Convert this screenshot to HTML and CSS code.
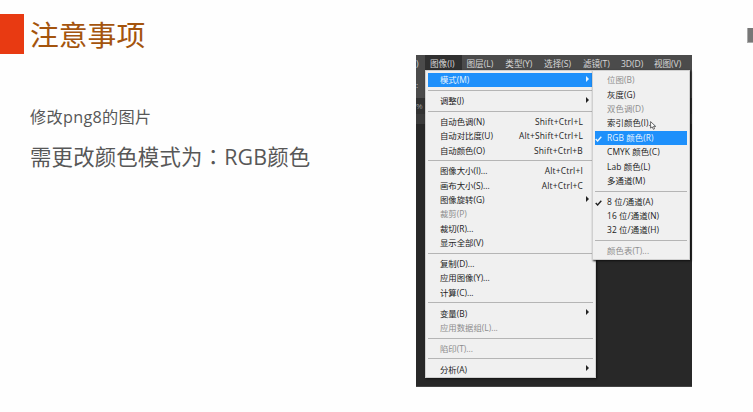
FILE: index.html
```html
<!DOCTYPE html>
<html lang="zh-CN">
<head>
<meta charset="utf-8">
<title>注意事项</title>
<link rel="stylesheet" href="styles.css">
</head>
<body>
<main class="slide">
  <section class="notes">
    <header class="heading"><span class="block"></span><h1>注意事项</h1></header>
    <p class="sub">修改png8的图片</p>
    <p class="lead">需更改颜色模式为<span class="colon" lang="zh-TW">：</span>RGB颜色</p>
  </section>
  <section class="editor">
    <nav class="menubar">
      <span class="cut">)</span><span class="open">图像(I)</span><span>图层(L)</span><span>类型(Y)</span><span>选择(S)</span><span>滤镜(T)</span><span>3D(D)</span><span>视图(V)</span>
    </nav>
    <div class="options">:</div>
    <div class="tabs">%</div>
    <div class="ruler"></div>
    <div class="menu main">
      <div class="row active"><span>模式(M)</span><i class="arrow"></i></div>
      <hr>
      <div class="row"><span>调整(J)</span><i class="arrow"></i></div>
      <hr>
      <div class="row"><span>自动色调(N)</span><kbd>Shift+Ctrl+L</kbd></div>
      <div class="row"><span>自动对比度(U)</span><kbd>Alt+Shift+Ctrl+L</kbd></div>
      <div class="row"><span>自动颜色(O)</span><kbd>Shift+Ctrl+B</kbd></div>
      <hr>
      <div class="row"><span>图像大小(I)...</span><kbd>Alt+Ctrl+I</kbd></div>
      <div class="row"><span>画布大小(S)...</span><kbd>Alt+Ctrl+C</kbd></div>
      <div class="row"><span>图像旋转(G)</span><i class="arrow"></i></div>
      <div class="row off"><span>裁剪(P)</span></div>
      <div class="row"><span>裁切(R)...</span></div>
      <div class="row"><span>显示全部(V)</span></div>
      <hr>
      <div class="row"><span>复制(D)...</span></div>
      <div class="row"><span>应用图像(Y)...</span></div>
      <div class="row"><span>计算(C)...</span></div>
      <hr>
      <div class="row"><span>变量(B)</span><i class="arrow"></i></div>
      <div class="row off"><span>应用数据组(L)...</span></div>
      <hr>
      <div class="row off"><span>陷印(T)...</span></div>
      <hr>
      <div class="row"><span>分析(A)</span><i class="arrow"></i></div>
    </div>
    <div class="menu submenu">
      <div class="row off"><span>位图(B)</span></div>
      <div class="row"><span>灰度(G)</span></div>
      <div class="row off"><span>双色调(D)</span></div>
      <div class="row"><span>索引颜色(I)...</span></div>
      <div class="row active"><svg class="check" viewBox="0 0 7 6"><path d="M.7 3 2.6 5 6.3.8"/></svg><span>RGB 颜色(R)</span></div>
      <div class="row"><span>CMYK 颜色(C)</span></div>
      <div class="row"><span>Lab 颜色(L)</span></div>
      <div class="row"><span>多通道(M)</span></div>
      <hr>
      <div class="row"><svg class="check" viewBox="0 0 7 6"><path d="M.7 3 2.6 5 6.3.8"/></svg><span>8 位/通道(A)</span></div>
      <div class="row"><span>16 位/通道(N)</span></div>
      <div class="row"><span>32 位/通道(H)</span></div>
      <hr>
      <div class="row off"><span>颜色表(T)...</span></div>
    </div>
    <svg class="cursor" viewBox="0 0 7 9"><path d="M.6.6v6.5l1.6-1.3 1.2 2.5 1.2-.6-1.1-2.3h2.2z"/></svg>
  </section>
  <span class="edge"></span>
</main>
</body>
</html>
```

FILE: styles.css
```css
* { box-sizing: border-box; }
body { margin: 0; background: #fefefe; font-family: "Open Sans", "Noto Sans CJK SC", sans-serif; }
.slide { position: relative; display: flex; width: 753px; height: 412px; overflow: hidden; }
.notes { width: 416px; padding-top: 14px; color: #575757; }
.heading { display: flex; align-items: center; height: 40px; gap: 6px; }
.block { width: 24px; height: 40px; background: #e83a12; }
h1 { margin: 0; padding-top: 1px; font-size: 28.8px; line-height: 40px; font-weight: 400; color: #a4540d; }
.sub, .lead { margin: 0 0 0 30px; white-space: nowrap; }
.sub { margin-top: 51px; font-size: 16.2px; line-height: 24px; letter-spacing: .3px; }
.lead { margin-top: 12px; font-size: 21.4px; line-height: 32px; letter-spacing: .18px; }
.colon { font-family: "Noto Sans CJK TC", sans-serif; line-height: 1; }
.editor { position: relative; width: 276px; height: 332px; margin-top: 55px; background: #282828; border-bottom: 1px solid #444; }
.menubar { display: flex; height: 16px; background: #4b4b4b; color: #d8d8d8; font-size: 8.6px; line-height: 18px; white-space: nowrap; }
.menubar span { width: 38.8px; padding-left: 5px; }
.menubar .cut { width: 9px; padding-left: 0; }
.menubar .open { width: 36.5px; background: #303030; }
.menubar span:nth-child(6) { width: 38px; }
.menubar span:nth-child(7) { width: 33px; }
.options { height: 27px; background: #4b4b4b; color: #ccc; font-size: 8px; line-height: 27px; }
.tabs { height: 16px; background: #323232; color: #999; font-size: 8px; line-height: 16px; }
.ruler { height: 10px; background: #3b3b3b; }
.menu { position: absolute; top: 15px; background: #f0f0f0; border: 1px solid #d0d0d0; box-shadow: 1px 1px 2px #111; color: #222; font-size: 8.4px; }
.main { left: 9px; width: 171px; height: 308px; padding: 2px 2px 0; }
.submenu { left: 176px; width: 98px; height: 190px; padding: 2px 2px 0; }
.submenu .row { letter-spacing: .1px; }
.row { position: relative; display: flex; align-items: center; height: 14.4px; padding: 0 10px 0 12px; white-space: nowrap; line-height: 14px; }
.row > span { flex: 1; }
.row.off { color: #8c8c8c; }
.row.active { background: #1e90fb; color: #e8f5ff; }
kbd { font-family: inherit; letter-spacing: .22px; }
hr { height: 1px; margin: 2.4px 0 3px; border: 0; background: #b5b5b5; }
.arrow { position: absolute; right: 4px; top: 3px; border: 3px solid transparent; border-left: 3.5px solid currentColor; border-right: 0; }
.check { position: absolute; left: 0; top: 5px; width: 7px; height: 6px; fill: none; stroke: currentColor; stroke-width: 1.4; }
.cursor { position: absolute; left: 234px; top: 66px; width: 7px; height: 9px; fill: #fff; stroke: #444; stroke-width: .8; }
.edge { position: absolute; right: 0; top: 28px; width: 6px; height: 15px; background: #777; border-left: 1px solid #aaa; border-bottom: 1px solid #aaa; }
```
